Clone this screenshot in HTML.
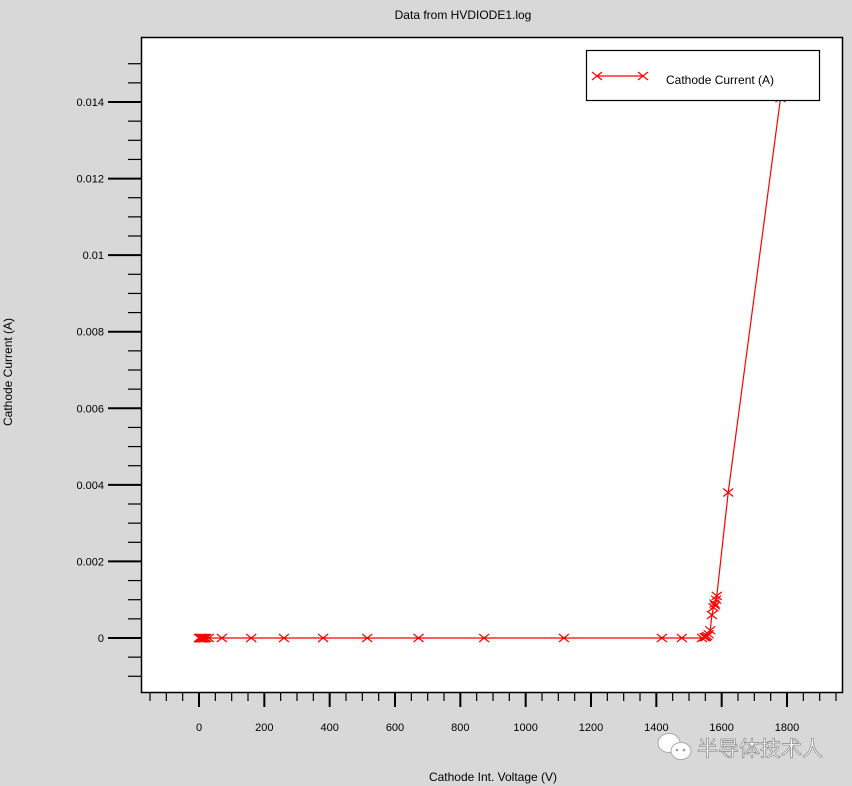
<!DOCTYPE html>
<html><head><meta charset="utf-8"><style>
html,body{margin:0;padding:0;background:#d8d8d8;width:852px;height:786px;overflow:hidden}
svg{display:block}
text{font-family:"Liberation Sans",Arial,sans-serif;fill:#000}
</style></head><body>
<svg id="s" width="852" height="786" viewBox="0 0 852 786" xmlns="http://www.w3.org/2000/svg">
<rect x="0" y="0" width="852" height="786" fill="#d8d8d8"/>
<rect x="141.5" y="37.5" width="701" height="655" fill="#fff" stroke="#000" stroke-width="1.5"/>
<text x="463" y="19" font-size="12" text-anchor="middle">Data from HVDIODE1.log</text>
<text x="493" y="781" font-size="12" text-anchor="middle">Cathode Int. Voltage (V)</text>
<text transform="translate(12,372) rotate(-90)" font-size="12" text-anchor="middle">Cathode Current (A)</text>
<g id="ticks" stroke="#000"></g>
<g id="lab" font-size="11"></g>
<g id="data" stroke="#f00" fill="none" stroke-width="1.2"></g>
<rect x="586.5" y="50.5" width="233" height="50" fill="#fff" stroke="#000" stroke-width="1.2"/>
<line x1="597" y1="76" x2="643" y2="76" stroke="#f00" stroke-width="1.2"/>
<path d="M592 72l10 8M592 80l10-8M638 72l10 8M638 80l10-8" stroke="#f00" stroke-width="1.2"/>
<text x="666" y="84" font-size="12">Cathode Current (A)</text>
<g transform="translate(658,733)">
<ellipse cx="11" cy="10" rx="11" ry="9.5" fill="#fff" stroke="#aaa"/>
<ellipse cx="23" cy="18" rx="10" ry="8.5" fill="#fff" stroke="#aaa"/>
<circle cx="19" cy="17" r="1.3" fill="#999"/><circle cx="26" cy="17" r="1.3" fill="#999"/>
</g>
<text x="697" y="756" font-size="21" style="font-family:'Noto Sans CJK SC',sans-serif;fill:#fff;stroke:#888;stroke-width:0.7">半导体技术人</text>
</svg>
<script>
var ns="http://www.w3.org/2000/svg";
function el(p,t,a,txt){var e=document.createElementNS(ns,t);for(var k in a)e.setAttribute(k,a[k]);if(txt)e.textContent=txt;document.getElementById(p).appendChild(e);}
var y0=638,py=38285;
for(var i=-7;i<=30;i++){var v=i*0.0005,y=y0-v*py;if(y<40||y>690)continue;var maj=(i%4==0);
el("ticks","line",{x1:maj?108:128,x2:141,y1:y,y2:y,"stroke-width":maj?2:1.2});
if(maj){var s=(i==0)?"0":String(Math.round(v*1000)/1000);el("lab","text",{x:104,y:y+4,"text-anchor":"end"},s);}}
var x0=199,px=0.32667;
for(var j=-3;j<=40;j++){var v=j*50,x=x0+v*px;if(x<145||x>842)continue;var maj=(j%4==0);
el("ticks","line",{x1:x,x2:x,y1:693,y2:maj?707:701,"stroke-width":maj?2:1.2});
if(maj&&v>=0)el("lab","text",{x:x,y:731,"text-anchor":"middle"},String(v));}
var pts=[[0,0],[3,0],[6,0],[9,0],[12,0],[15,0],[18,0],[22,0],[30,0],[70,0],[160,0],[260,0],[380,0],[515,0],[672,0],[873,0],[1117,0],[1417,0],[1478,0],[1540,0],[1548,0.00002],[1552,0.00003],[1556,0.00005],[1560,0.0001],[1565,0.0002],[1570,0.0006],[1575,0.0008],[1578,0.0009],[1580,0.00085],[1583,0.001],[1585,0.0011],[1620,0.0038],[1780,0.0141]];
var d="";pts.forEach(function(p,k){var x=x0+p[0]*px,y=y0-p[1]*py;d+=(k?"L":"M")+x.toFixed(1)+" "+y.toFixed(1);});
el("data","path",{d:d});
var m="";pts.forEach(function(p){var x=x0+p[0]*px,y=y0-p[1]*py;m+="M"+(x-5)+" "+(y-4)+"l10 8M"+(x-5)+" "+(y+4)+"l10 -8";});
el("data","path",{d:m});
</script>
</body></html>
